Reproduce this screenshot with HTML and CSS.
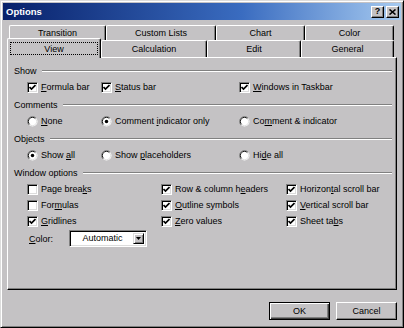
FILE: index.html
```html
<!DOCTYPE html>
<html lang="en">
<head>
    <meta charset="UTF-8">
    <title>Options</title>
    <link rel="stylesheet" href="styles.css">
</head>
<body>
    <div class="dialog">
        <div class="titlebar">
            <span class="title">Options</span>
            <div class="caption-btns">
                <span class="cbtn">?</span>
                <span class="cbtn">
                    <svg width="7" height="6" viewBox="0 0 7 6"><path d="M0.5 0.5 L6.5 5.5 M6.5 0.5 L0.5 5.5" stroke="#000" stroke-width="1.6"/></svg>
                </span>
            </div>
        </div>

        <div class="tabs">
            <div class="tabrow back">
                <div class="tab" style="width:97px">Transition</div>
                <div class="tab" style="width:110px">Custom Lists</div>
                <div class="tab" style="width:89px">Chart</div>
                <div class="tab" style="width:89px">Color</div>
            </div>
            <div class="tabrow front">
                <div class="tab active" style="width:94px"><span class="focus">View</span></div>
                <div class="tab" style="width:106px">Calculation</div>
                <div class="tab" style="width:94px">Edit</div>
                <div class="tab" style="width:93px">General</div>
            </div>
        </div>

        <div class="panel">
            <div class="group">
                <div class="legend">Show</div>
                <div class="row">
                    <label class="item c1"><span class="cb on"></span><span><u>F</u>ormula bar</span></label>
                    <label class="item c2"><span class="cb on"></span><span><u>S</u>tatus bar</span></label>
                    <label class="item"><span class="cb on"></span><span><u>W</u>indows in Taskbar</span></label>
                </div>
            </div>

            <div class="group">
                <div class="legend">Comments</div>
                <div class="row">
                    <label class="item c1"><span class="rb"></span><span><u>N</u>one</span></label>
                    <label class="item c2"><span class="rb on"></span><span>Comment <u>i</u>ndicator only</span></label>
                    <label class="item"><span class="rb"></span><span>Co<u>m</u>ment &amp; indicator</span></label>
                </div>
            </div>

            <div class="group">
                <div class="legend">Objects</div>
                <div class="row">
                    <label class="item c1"><span class="rb on"></span><span>Show <u>a</u>ll</span></label>
                    <label class="item c2"><span class="rb"></span><span>Show <u>p</u>laceholders</span></label>
                    <label class="item"><span class="rb"></span><span>Hi<u>d</u>e all</span></label>
                </div>
            </div>

            <div class="group wide">
                <div class="legend">Window options</div>
                <div class="grid">
                    <label class="item"><span class="cb"></span><span>Page brea<u>k</u>s</span></label>
                    <label class="item"><span class="cb on"></span><span>Row &amp; column h<u>e</u>aders</span></label>
                    <label class="item"><span class="cb on"></span><span>Horizon<u>t</u>al scroll bar</span></label>

                    <label class="item"><span class="cb"></span><span>For<u>m</u>ulas</span></label>
                    <label class="item"><span class="cb on"></span><span><u>O</u>utline symbols</span></label>
                    <label class="item"><span class="cb on"></span><span><u>V</u>ertical scroll bar</span></label>

                    <label class="item"><span class="cb on"></span><span><u>G</u>ridlines</span></label>
                    <label class="item"><span class="cb on"></span><span><u>Z</u>ero values</span></label>
                    <label class="item"><span class="cb on"></span><span>Sheet ta<u>b</u>s</span></label>

                    <div class="color">
                        <span class="color-label"><u>C</u>olor:</span>
                        <div class="select">
                            <span class="val">Automatic</span>
                            <span class="arrow"><svg width="5" height="3" viewBox="0 0 5 3"><path d="M0 0 H5 L2.5 3 Z" fill="#000"/></svg></span>
                        </div>
                    </div>
                </div>
            </div>
        </div>

        <div class="buttons">
            <button class="btn default">OK</button>
            <button class="btn">Cancel</button>
        </div>
    </div>

    <script>
        // check marks and radio dots are the same everywhere, so draw them here
        const checkSvg = '<svg width="7" height="7" viewBox="0 0 7 7"><polyline points="0.5,3 2.5,5 6.5,1" fill="none" stroke="#000" stroke-width="1.7"/></svg>';
        const radioSvg = on => `<svg width="11" height="11" viewBox="0 0 12 12">
            <circle cx="6" cy="6" r="5.5" fill="#fff"/>
            <path d="M9.9 2.1 A5.5 5.5 0 0 0 2.1 9.9" fill="none" stroke="#808080" stroke-width="1"/>
            <path d="M9.2 2.8 A4.5 4.5 0 0 0 2.8 9.2" fill="none" stroke="#000" stroke-width="1"/>
            <path d="M9.2 2.8 A4.5 4.5 0 0 1 2.8 9.2" fill="none" stroke="#dcdcdc" stroke-width="1"/>
            ${on ? '<circle cx="6" cy="6" r="1.9" fill="#000"/>' : ''}
        </svg>`;

        document.querySelectorAll('.cb.on').forEach(el => el.innerHTML = checkSvg);
        document.querySelectorAll('.rb').forEach(el => el.innerHTML = radioSvg(el.classList.contains('on')));
    </script>
</body>
</html>
```

FILE: styles.css
```css
* {
    box-sizing: border-box;
}
body {
    margin: 0;
    font-family: "Liberation Sans", Arial, sans-serif;
    font-size: 9px;
    color: #000;
    background: #c4c2c4;
}
u {
    text-decoration-thickness: 1px;
    text-underline-offset: 1px;
}
.dialog {
    width: 404px;
    height: 328px;
    background: #c4c2c4;
    border: 1px solid;
    border-color: #dcdcdc #000 #000 #dcdcdc;
    box-shadow: inset 1px 1px #fff, inset -1px -1px #808080;
    padding: 2px;
    display: flex;
    flex-direction: column;
}
.titlebar {
    height: 17px;
    flex-shrink: 0;
    display: flex;
    align-items: center;
    justify-content: space-between;
    padding: 0 2px 0 3px;
    background: linear-gradient(to right, #08216b, #3a6cc0 60%, #a6caf0);
}
.title {
    color: #fff;
    font-weight: bold;
    font-size: 9.5px;
}
.caption-btns {
    display: flex;
    gap: 2px;
}
.cbtn {
    width: 13px;
    height: 12px;
    background: #c4c2c4;
    border: 1px solid;
    border-color: #fff #000 #000 #fff;
    box-shadow: inset -1px -1px #808080;
    display: flex;
    align-items: center;
    justify-content: center;
    font-weight: bold;
    font-size: 9px;
    line-height: 1;
}
.tabs {
    margin-top: 5px;
}
.tabrow {
    display: flex;
}
.tabrow.back {
    padding-left: 6px;
    height: 15px;
}
.tabrow.front {
    padding-left: 4px;
    height: 17px;
}
.tab {
    height: 100%;
    display: flex;
    align-items: center;
    justify-content: center;
    background: #c4c2c4;
    border-top: 1px solid #fff;
    border-left: 1px solid #fff;
    border-right: 1px solid #000;
    box-shadow: inset -1px 0 #808080;
    border-radius: 2px 2px 0 0;
}
.tab.active {
    height: 20px;
    margin-top: -2px;
    position: relative;
    z-index: 1;
}
.focus {
    width: 88px;
    height: 13px;
    border: 1px dotted #000;
    display: flex;
    align-items: center;
    justify-content: center;
}
.panel {
    margin-left: 4px;
    width: 390px;
    height: 233px;
    flex-shrink: 0;
    border-top: 1px solid #fff;
    border-left: 1px solid #fff;
    border-right: 1px solid #000;
    border-bottom: 1px solid #000;
    box-shadow: inset -1px -1px #808080;
    padding: 5px 4px 0 6px;
}
.group {
    margin-bottom: 2px;
}
.group.wide {
    margin-top: 1px;
}
.legend {
    display: flex;
    align-items: center;
    height: 16px;
}
.legend::after {
    content: "";
    flex: 1;
    margin-left: 5px;
    border-top: 1px solid #808080;
    border-bottom: 1px solid #fff;
}
.row {
    display: flex;
    align-items: center;
    height: 16px;
    padding-left: 13px;
}
.c1 {
    width: 74px;
}
.c2 {
    width: 138px;
}
.item {
    display: flex;
    align-items: center;
    gap: 3px;
}
.cb {
    width: 11px;
    height: 11px;
    flex-shrink: 0;
    background: #fff;
    border: 1px solid;
    border-color: #808080 #fff #fff #808080;
    box-shadow: inset 1px 1px #000, inset -1px -1px #dcdcdc;
    display: flex;
    align-items: center;
    justify-content: center;
}
.cb svg {
    display: block;
}
.rb {
    width: 11px;
    height: 11px;
    flex-shrink: 0;
    display: flex;
}
.grid {
    display: grid;
    grid-template-columns: 134px 125px 1fr;
    grid-template-rows: 16px 16px 16px 19px;
    align-items: center;
    padding-left: 13px;
}
.color {
    display: flex;
    align-items: center;
}
.color-label {
    width: 42px;
    padding-left: 2px;
}
.select {
    width: 78px;
    height: 17px;
    background: #fff;
    border: 1px solid;
    border-color: #808080 #fff #fff #808080;
    box-shadow: inset 1px 1px #000, inset -1px -1px #dcdcdc;
    padding: 2px;
    display: flex;
}
.val {
    flex: 1;
    text-align: center;
    line-height: 11px;
}
.arrow {
    width: 11px;
    background: #c4c2c4;
    border: 1px solid;
    border-color: #dcdcdc #000 #000 #dcdcdc;
    box-shadow: inset 1px 1px #fff, inset -1px -1px #808080;
    display: flex;
    align-items: center;
    justify-content: center;
}
.buttons {
    display: flex;
    justify-content: flex-end;
    gap: 6px;
    margin-top: 12px;
    padding-right: 4px;
}
.btn {
    width: 61px;
    height: 18px;
    padding: 0;
    font: inherit;
    color: #000;
    background: #c4c2c4;
    border: 1px solid;
    border-color: #fff #000 #000 #fff;
    box-shadow: inset -1px -1px #808080;
    display: flex;
    align-items: center;
    justify-content: center;
}
.btn.default {
    border: 1px solid #000;
    box-shadow: inset 1px 1px #fff, inset -1px -1px #404040, inset -2px -2px #808080;
}
```
